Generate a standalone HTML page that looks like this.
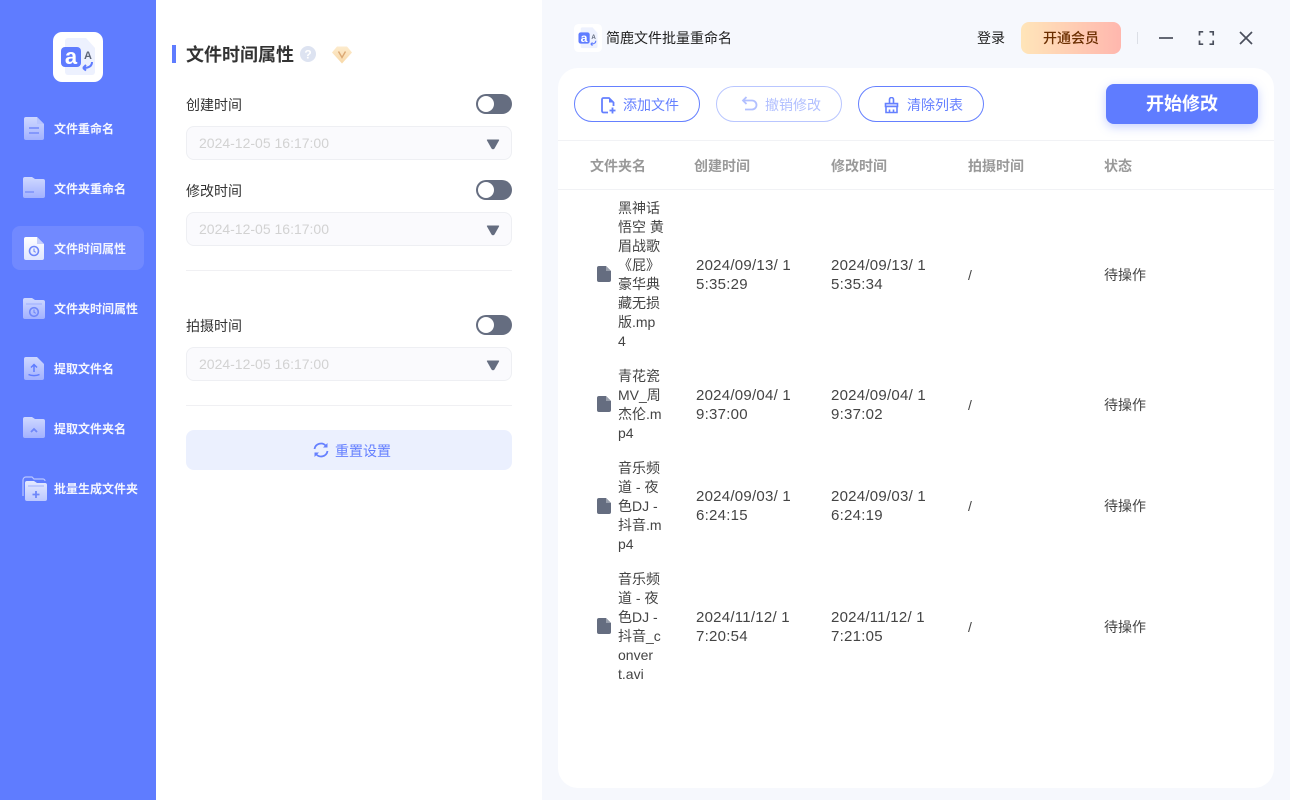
<!DOCTYPE html>
<html lang="zh"><head><meta charset="utf-8"><title>简鹿文件批量重命名</title>
<style>
*{box-sizing:border-box}
html,body{margin:0;padding:0;width:1290px;height:800px;overflow:hidden;background:#f6f8fd;font-family:"Liberation Sans","Noto Sans CJK SC",sans-serif;color:#333}
.a{position:absolute}
.t{position:absolute;white-space:nowrap;line-height:20px}
#side{left:0;top:0;width:156px;height:800px;background:#5f7cff}
#mid{left:156px;top:0;width:386px;height:800px;background:#fff}
#card{left:558px;top:68px;width:716px;height:720px;background:#fff;border-radius:20px}
.nav{position:absolute;left:54px;font-size:12px;font-weight:700;color:#f4f6ff;white-space:nowrap;line-height:20px}
.lbl{position:absolute;left:186px;font-size:14px;color:#333;line-height:20px;white-space:nowrap}
.sw{position:absolute;left:476px;width:36px;height:20px;border-radius:10px;background:#656d80}
.sw i{position:absolute;left:2px;top:2px;width:16px;height:16px;border-radius:50%;background:#fff}
.inp{position:absolute;left:186px;width:326px;height:34px;background:#fafafd;border:1px solid #eeeff3;border-radius:8px}
.inp span{position:absolute;left:12px;top:6px;font-size:14px;color:#d2d2d2;line-height:20px;white-space:nowrap}
.inp svg{position:absolute;left:299px;top:12px}
.hr{position:absolute;left:186px;width:326px;height:1px;background:#f0f0f3}
.btn{position:absolute;top:86px;width:126px;height:36px;border:1px solid #6580ff;border-radius:18px;background:#fff}
.btn span{position:absolute;left:48px;top:8px;font-size:14px;color:#6580ff;line-height:20px;white-space:nowrap}
.th{position:absolute;top:156px;font-size:14px;font-weight:700;color:#999;line-height:20px;white-space:nowrap}
.nm{position:absolute;left:618px;font-size:14px;line-height:19px;color:#444;white-space:nowrap}
.dt{position:absolute;font-size:15px;line-height:19px;color:#444;letter-spacing:.25px;white-space:nowrap}
.st{position:absolute;left:1104px;font-size:14px;line-height:20px;color:#444;white-space:nowrap}
.sl{position:absolute;left:968px;font-size:14px;line-height:20px;color:#444}
svg{display:block}
</style></head><body>
<div class="a" id="side"></div>
<div class="a" id="mid"></div>
<div class="a" id="card"></div>

<!-- logo -->
<svg class="a" style="left:53px;top:32px" width="50" height="50" viewBox="0 0 50 50">
<rect width="50" height="50" rx="9" fill="#fff"/>
<path d="M12 9a3 3 0 0 1 3-3h18l9 10v24a3 3 0 0 1-3 3H15a3 3 0 0 1-3-3z" fill="#edf1fe"/>
<rect x="8" y="15" width="20" height="20" rx="4" fill="#5f7cff"/>
<text x="18" y="32" text-anchor="middle" font-size="22" font-weight="700" fill="#fff" font-family="Liberation Sans">a</text>
<text x="35" y="27" text-anchor="middle" font-size="11" font-weight="700" fill="#5d6678" font-family="Liberation Sans">A</text>
<path d="M39 30c0 4-3 6-9 6M30 36l3-3M30 36l3 2.500" stroke="#5f7cff" stroke-width="2" fill="none"/>
</svg>

<!-- nav -->
<div class="a" style="left:12px;top:226px;width:132px;height:44px;background:#7189ff;border-radius:8px"></div>
<svg class="a" style="left:0;top:0" width="156" height="520" viewBox="0 0 156 520">
<defs>
<linearGradient id="g" x1="0" y1="0" x2="0" y2="1"><stop offset="0" stop-color="#cfd8ff"/><stop offset="1" stop-color="#a2b1ff"/></linearGradient>
<linearGradient id="w" x1="0" y1="0" x2="0" y2="1"><stop offset="0" stop-color="#fff"/><stop offset="1" stop-color="#dfe5ff"/></linearGradient>
<linearGradient id="h" x1="0" y1="0" x2="0" y2="1"><stop offset="0" stop-color="#e4e9ff"/><stop offset="1" stop-color="#bcc8ff"/></linearGradient>
</defs>
<path d="M26 117h11l7 7v14a2 2 0 0 1-2 2H26a2 2 0 0 1-2-2v-19a2 2 0 0 1 2-2z" fill="url(#g)"/>
<path d="M37 117l7 7h-7z" fill="#b7c4ff"/>
<path d="M29 128h10M29 133h10" stroke="#7d92fb" stroke-width="1.800"/>
<path d="M25 177h7l3 2h8a2 2 0 0 1 2 2v15a2 2 0 0 1-2 2H25a2 2 0 0 1-2-2v-17a2 2 0 0 1 2-2z" fill="url(#g)"/>
<path d="M25 192h9" stroke="#7d92fb" stroke-width="1.500"/>
<path d="M26 237h11l7 7v14a2 2 0 0 1-2 2H26a2 2 0 0 1-2-2v-19a2 2 0 0 1 2-2z" fill="url(#w)"/>
<path d="M37 237l7 7h-7z" fill="#c5cffc"/>
<circle cx="34" cy="251" r="4.500" fill="none" stroke="#6f87f9" stroke-width="1.600"/><path d="M34 248.500v2.800l1.800 1" stroke="#6f87f9" stroke-width="1.100" fill="none"/>
<path d="M25 298h7l3 2h8a2 2 0 0 1 2 2v15a2 2 0 0 1-2 2H25a2 2 0 0 1-2-2v-17a2 2 0 0 1 2-2z" fill="url(#g)"/>
<path d="M26 304h16" stroke="#a9b8ff" stroke-width="1.500"/>
<circle cx="34" cy="312" r="4.300" fill="none" stroke="#6f87f9" stroke-width="1.600"/><path d="M34 309.500v2.800l1.800 1" stroke="#6f87f9" stroke-width="1.100" fill="none"/>
<path d="M26 357h11l7 7v14a2 2 0 0 1-2 2H26a2 2 0 0 1-2-2v-19a2 2 0 0 1 2-2z" fill="url(#g)"/>
<path d="M34 372v-7M31 367.500l3-3 3 3M28.500 374.500c3 1.500 8 1.500 11 0" stroke="#5f7cff" stroke-width="1.500" fill="none"/>
<path d="M25 417h7l3 2h8a2 2 0 0 1 2 2v15a2 2 0 0 1-2 2H25a2 2 0 0 1-2-2v-17a2 2 0 0 1 2-2z" fill="url(#g)"/>
<path d="M31 432l3-3 3 3" stroke="#6f87f9" stroke-width="1.800" fill="none"/>
<path d="M23 496v-16a3 3 0 0 1 3-3h6l2 2h9a2 2 0 0 1 2 2" stroke="#b9c6ff" stroke-width="1.200" fill="none"/>
<path d="M27 481h7l3 2h8a2 2 0 0 1 2 2v14a2 2 0 0 1-2 2H27a2 2 0 0 1-2-2v-16a2 2 0 0 1 2-2z" fill="url(#h)"/>
<path d="M28 486h16" stroke="#b3c0ff" stroke-width="1.500"/><path d="M36 491v7M32.500 494.500h7" stroke="#6f87f9" stroke-width="1.800"/>
</svg>
<div class="nav" style="top:119px">文件重命名</div>
<div class="nav" style="top:179px">文件夹重命名</div>
<div class="nav" style="top:239px">文件时间属性</div>
<div class="nav" style="top:299px">文件夹时间属性</div>
<div class="nav" style="top:359px">提取文件名</div>
<div class="nav" style="top:419px">提取文件夹名</div>
<div class="nav" style="top:479px">批量生成文件夹</div>

<!-- middle panel -->
<div class="a" style="left:172px;top:45px;width:4px;height:18px;background:#5f7cff"></div>
<div class="t" style="left:186px;top:44px;font-size:18px;font-weight:700;line-height:22px;color:#333">文件时间属性</div>
<svg class="a" style="left:300px;top:46px" width="16" height="16" viewBox="0 0 16 16"><circle cx="8" cy="8" r="8" fill="#dde3f1"/><text x="8" y="12.500" text-anchor="middle" font-size="12" font-weight="700" fill="#fff" font-family="Liberation Sans">?</text></svg>
<svg class="a" style="left:331px;top:44px" width="22" height="22" viewBox="0 0 22 22"><defs><linearGradient id="d" x1="0" y1="0" x2="0" y2="1"><stop offset="0" stop-color="#fdebcd"/><stop offset="1" stop-color="#f8d9a8"/></linearGradient></defs><path d="M6 2.500h10l5 6-10 11-10-11z" fill="url(#d)"/><path d="M7.500 7.500l3.500 6 3.500-6" stroke="#dba874" stroke-width="1.400" fill="none"/></svg>

<div class="lbl" style="top:95px">创建时间</div>
<div class="sw" style="top:94px"><i></i></div>
<div class="inp" style="top:126px"><span>2024-12-05 16:17:00</span><svg width="14" height="11" viewBox="0 0 14 11"><path d="M1 1.500Q.5.500 1.500.500h11q1 0 .5 1L8.500 9.500q-1.500 1.500-3 0z" fill="#656d80"/></svg></div>
<div class="lbl" style="top:181px">修改时间</div>
<div class="sw" style="top:180px"><i></i></div>
<div class="inp" style="top:212px"><span>2024-12-05 16:17:00</span><svg width="14" height="11" viewBox="0 0 14 11"><path d="M1 1.500Q.5.500 1.500.500h11q1 0 .5 1L8.500 9.500q-1.500 1.500-3 0z" fill="#656d80"/></svg></div>
<div class="hr" style="top:270px"></div>
<div class="lbl" style="top:316px">拍摄时间</div>
<div class="sw" style="top:315px"><i></i></div>
<div class="inp" style="top:347px"><span>2024-12-05 16:17:00</span><svg width="14" height="11" viewBox="0 0 14 11"><path d="M1 1.500Q.5.500 1.500.500h11q1 0 .5 1L8.500 9.500q-1.500 1.500-3 0z" fill="#656d80"/></svg></div>
<div class="hr" style="top:405px"></div>
<div class="a" style="left:186px;top:430px;width:326px;height:40px;background:#ebf0fe;border-radius:8px"></div>
<svg class="a" style="left:313px;top:442px" width="16" height="16" viewBox="0 0 16 16" fill="none" stroke="#6580ff" stroke-width="1.800"><path d="M1.500 7A6.500 6.500 0 0 1 13 4"/><path d="M14.500 9A6.500 6.500 0 0 1 3 12"/><path d="M14.500 1v4.500H10z" fill="#6580ff" stroke="none"/><path d="M1.500 15v-4.500H6z" fill="#6580ff" stroke="none"/></svg>
<div class="t" style="left:335px;top:441px;font-size:14px;color:#6580ff">重置设置</div>

<!-- title bar -->
<svg class="a" style="left:574px;top:24px" width="28" height="28" viewBox="0 0 50 50"><rect width="50" height="50" rx="8" fill="#fff"/><path d="M12 9a3 3 0 0 1 3-3h18l9 10v24a3 3 0 0 1-3 3H15a3 3 0 0 1-3-3z" fill="#edf1fe"/><rect x="8" y="15" width="20" height="20" rx="4" fill="#5f7cff"/><text x="18" y="32" text-anchor="middle" font-size="22" font-weight="700" fill="#fff" font-family="Liberation Sans">a</text><text x="35" y="27" text-anchor="middle" font-size="11" font-weight="700" fill="#5d6678" font-family="Liberation Sans">A</text><path d="M39 30c0 4-3 6-9 6M30 36l3-3M30 36l3 2.500" stroke="#5f7cff" stroke-width="2" fill="none"/></svg>
<div class="t" style="left:606px;top:28px;font-size:14px;color:#222">简鹿文件批量重命名</div>
<div class="t" style="left:977px;top:28px;font-size:14px;color:#222">登录</div>
<div class="a" style="left:1021px;top:22px;width:100px;height:32px;border-radius:8px;background:linear-gradient(90deg,#ffe5b9,#ffb7ae)"></div>
<div class="t" style="left:1043px;top:28px;font-size:14px;font-weight:500;color:#6b2e00">开通会员</div>
<div class="a" style="left:1137px;top:32px;width:1px;height:12px;background:#dcdfe6"></div>
<svg class="a" style="left:1155px;top:28px" width="105" height="20" viewBox="0 0 105 20" fill="none" stroke="#4a4f5c" stroke-width="1.700"><path d="M4 10h14"/><path d="M44.500 7.500V3.800h3.700M54.500 3.800h3.700v3.700M58.200 12.500v3.700h-3.700M48.200 16.200h-3.700v-3.700"/><path d="M85 4l12 12M97 4L85 16"/></svg>

<!-- toolbar -->
<div class="btn" style="left:574px"><span>添加文件</span>
<svg class="a" style="left:25px;top:10px" width="17" height="17" viewBox="0 0 17 17" fill="none" stroke="#6580ff" stroke-width="1.800"><path d="M8 15.500H3.500A1.500 1.500 0 0 1 2 14V2.500A1.500 1.500 0 0 1 3.500 1H9l4.500 4.500V9"/><path d="M12.500 10.500v6M9.500 13.500h6"/><path d="M9 1l4.500 4.500H9z" fill="#6580ff" stroke="none"/></svg></div>
<div class="btn" style="left:716px;border-color:#b9c6ff"><span style="color:#b2c0ff">撤销修改</span>
<svg class="a" style="left:24px;top:9px" width="18" height="16" viewBox="0 0 18 16" fill="none" stroke="#b2c0ff" stroke-width="1.800"><path d="M5.500 1L2 4.500 5.500 8"/><path d="M2 4.500h9a4.500 4.500 0 0 1 0 9H4"/></svg></div>
<div class="btn" style="left:858px"><span>清除列表</span>
<svg class="a" style="left:24px;top:10px" width="17" height="17" viewBox="0 0 17 17" fill="none" stroke="#6580ff" stroke-width="1.600"><path d="M6.500 6V2.500a2 2 0 0 1 4 0V6"/><path d="M2.500 6.500h12v3h-12z" fill="#d6deff"/><path d="M3 9.500v6h11v-6M6.500 12.500v3M10.500 12.500v3"/></svg></div>
<div class="a" style="left:1106px;top:84px;width:152px;height:40px;background:#5f7cff;border-radius:8px;box-shadow:0 3px 10px rgba(95,124,255,.35)"></div>
<div class="t" style="left:1146px;top:94px;font-size:18px;font-weight:700;color:#fff">开始修改</div>
<div class="a" style="left:558px;top:140px;width:716px;height:1px;background:#f1f2f5"></div>
<div class="a" style="left:558px;top:189px;width:716px;height:1px;background:#f1f2f5"></div>

<!-- table -->
<div class="th" style="left:590px">文件夹名</div>
<div class="th" style="left:694px">创建时间</div>
<div class="th" style="left:831px">修改时间</div>
<div class="th" style="left:968px">拍摄时间</div>
<div class="th" style="left:1104px">状态</div>

<div class="nm" style="top:199px">黑神话<br>悟空 黄<br>眉战歌<br>《屁》<br>豪华典<br>藏无损<br>版.mp<br>4</div>
<div class="dt" style="left:696px;top:256px">2024/09/13/ 1<br>5:35:29</div>
<div class="dt" style="left:831px;top:256px">2024/09/13/ 1<br>5:35:34</div>
<div class="sl" style="top:265px">/</div><div class="st" style="top:265px">待操作</div>

<div class="nm" style="top:367px">青花瓷<br>MV_周<br>杰伦.m<br>p4</div>
<div class="dt" style="left:696px;top:386px">2024/09/04/ 1<br>9:37:00</div>
<div class="dt" style="left:831px;top:386px">2024/09/04/ 1<br>9:37:02</div>
<div class="sl" style="top:395px">/</div><div class="st" style="top:395px">待操作</div>

<div class="nm" style="top:459px">音乐频<br>道 - 夜<br>色DJ -<br>抖音.m<br>p4</div>
<div class="dt" style="left:696px;top:487px">2024/09/03/ 1<br>6:24:15</div>
<div class="dt" style="left:831px;top:487px">2024/09/03/ 1<br>6:24:19</div>
<div class="sl" style="top:496px">/</div><div class="st" style="top:496px">待操作</div>

<div class="nm" style="top:570px">音乐频<br>道 - 夜<br>色DJ -<br>抖音_c<br>onver<br>t.avi</div>
<div class="dt" style="left:696px;top:608px">2024/11/12/ 1<br>7:20:54</div>
<div class="dt" style="left:831px;top:608px">2024/11/12/ 1<br>7:21:05</div>
<div class="sl" style="top:617px">/</div><div class="st" style="top:617px">待操作</div>

<svg class="a" style="left:597px;top:266px" width="14" height="16" viewBox="0 0 14 16"><path d="M2 0h7l5 5v9a2 2 0 0 1-2 2H2a2 2 0 0 1-2-2V2a2 2 0 0 1 2-2z" fill="#656d80"/><path d="M9 0v5h5" fill="#9aa0ad"/></svg>
<svg class="a" style="left:597px;top:396px" width="14" height="16" viewBox="0 0 14 16"><path d="M2 0h7l5 5v9a2 2 0 0 1-2 2H2a2 2 0 0 1-2-2V2a2 2 0 0 1 2-2z" fill="#656d80"/><path d="M9 0v5h5" fill="#9aa0ad"/></svg>
<svg class="a" style="left:597px;top:498px" width="14" height="16" viewBox="0 0 14 16"><path d="M2 0h7l5 5v9a2 2 0 0 1-2 2H2a2 2 0 0 1-2-2V2a2 2 0 0 1 2-2z" fill="#656d80"/><path d="M9 0v5h5" fill="#9aa0ad"/></svg>
<svg class="a" style="left:597px;top:618px" width="14" height="16" viewBox="0 0 14 16"><path d="M2 0h7l5 5v9a2 2 0 0 1-2 2H2a2 2 0 0 1-2-2V2a2 2 0 0 1 2-2z" fill="#656d80"/><path d="M9 0v5h5" fill="#9aa0ad"/></svg>
</body></html>
